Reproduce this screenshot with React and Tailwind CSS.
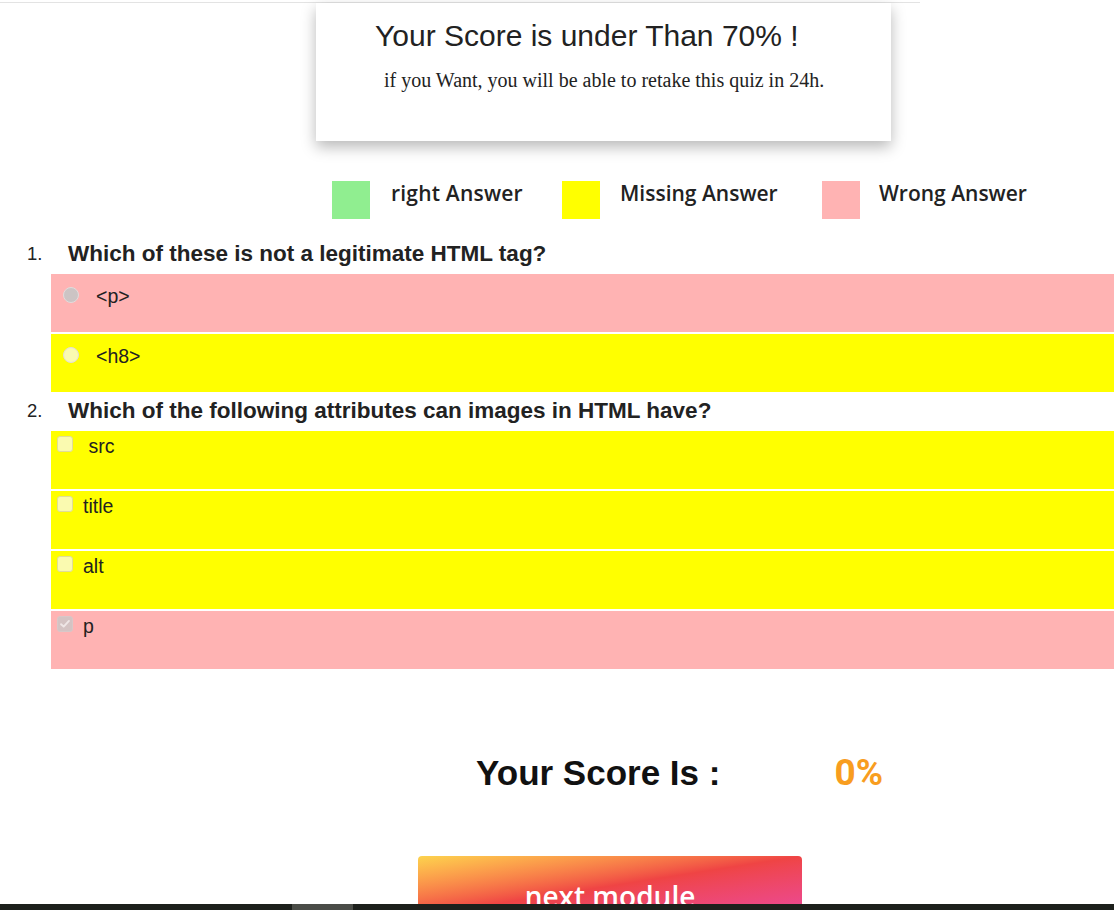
import React from 'react';

const PINK = 'bg-[#ffb3b3]';
const YELLOW = 'bg-[#ffff00]';

const questions = [
  {
    n: '1.',
    text: 'Which of these is not a legitimate HTML tag?',
    type: 'radio',
    options: [
      { label: '<p>', state: 'wrong', checked: true },
      { label: '<h8>', state: 'missing' },
    ],
  },
  {
    n: '2.',
    text: 'Which of the following attributes can images in HTML have?',
    type: 'checkbox',
    options: [
      { label: '\u00a0src', state: 'missing' },
      { label: 'title', state: 'missing' },
      { label: 'alt', state: 'missing' },
      { label: 'p', state: 'wrong', checked: true },
    ],
  },
];

function Radio({ state }) {
  const fill = state === 'wrong' ? 'bg-[#ccc4c4]' : 'bg-[#fafab0]';
  return (
    <span className={`mt-[2px] h-[16px] w-[16px] shrink-0 rounded-full border border-[#e2dcdc] ${fill}`} />
  );
}

function Checkbox({ state, checked }) {
  const fill = state === 'wrong' ? 'bg-[#d4c3c3] border-[#d8c8c8]' : 'bg-[#fafab0] border-[#e0dd9a]';
  return (
    <span className={`relative h-[16px] w-[16px] shrink-0 rounded-[3px] border ${fill}`}>
      {checked && (
        <svg viewBox="0 0 16 16" className="absolute inset-0 h-full w-full">
          <path d="M3.5 8.2 L6.5 11 L12.5 4.5" fill="none" stroke="#efe6e6" strokeWidth="2.2" strokeLinecap="round" strokeLinejoin="round" />
        </svg>
      )}
    </span>
  );
}

export default function App() {
  return (
    <div className="min-h-[910px] bg-white font-['Liberation_Sans',Arial,sans-serif] text-[#222]">
      <div className="h-[2px]" />
      <div className="h-px w-[920px] bg-[#e3e3e3]" />

      {/* result card */}
      <div className="ml-[316px] h-[138px] w-[575px] bg-white shadow-[0_6px_14px_rgba(0,0,0,0.28)]">
        <h2 className="pl-[59px] pt-[16px] text-[30px] leading-[34px] text-[#222]">
          Your Score is under Than 70% !
        </h2>
        <p className="pl-[68px] pt-[15px] font-['Liberation_Serif','Times_New_Roman',serif] text-[20px] leading-[24px] text-[#222]">
          if you Want, you will be able to retake this quiz in 24h.
        </p>
      </div>

      {/* legend */}
      <div className="ml-[332px] mt-[40px] flex items-start font-['Open_Sans',sans-serif] text-[21px] font-semibold text-[#222]">
        <div className="flex w-[230px] items-start">
          <span className="h-[38px] w-[38px] bg-[#90ee90]" />
          <span className="ml-[21px] leading-[24px] tracking-[0.2px]">right Answer</span>
        </div>
        <div className="flex w-[260px] items-start">
          <span className="h-[38px] w-[38px] bg-[#ffff00]" />
          <span className="ml-[20px] leading-[24px]">Missing Answer</span>
        </div>
        <div className="flex items-start">
          <span className="h-[38px] w-[38px] bg-[#ffb3b3]" />
          <span className="ml-[19px] leading-[24px]">Wrong Answer</span>
        </div>
      </div>

      {/* questions */}
      <div className="mt-[22px]">
        {questions.map((q, qi) => (
          <div key={qi} className={qi === 0 ? '' : 'mt-[6px]'}>
            <div className="flex items-center">
              <span className="w-[68px] pl-[27px] text-[18.5px] leading-[26px]">{q.n}</span>
              <span className="text-[22.5px] font-bold leading-[26px] text-[#222]">{q.text}</span>
            </div>
            <div className="ml-[51px] mt-[7px] flex flex-col gap-[2px]">
              {q.options.map((o, oi) => (
                <div
                  key={oi}
                  className={`flex h-[58px] items-start ${o.state === 'wrong' ? PINK : YELLOW} ${
                    q.type === 'radio' ? 'pl-[12px] pt-[11px]' : 'pl-[6px] pt-[5px]'
                  }`}
                >
                  {q.type === 'radio' ? (
                    <>
                      <Radio state={o.state} />
                      <span className="ml-[17px] text-[19.5px] leading-[22px]">{o.label}</span>
                    </>
                  ) : (
                    <>
                      <Checkbox state={o.state} checked={o.checked} />
                      <span className="ml-[10px] -mt-[1px] text-[19.5px] leading-[22px]">{o.label}</span>
                    </>
                  )}
                </div>
              ))}
            </div>
          </div>
        ))}
      </div>

      {/* score */}
      <div className="mt-[84px] flex items-center">
        <span className="ml-[476px] text-[35px] font-bold leading-[40px] text-[#111]">Your Score Is :</span>
        <span className="ml-[114px] font-['Roboto',sans-serif] text-[37px] font-bold leading-[40px] text-[#f89d1f]">0%</span>
      </div>

      {/* next module */}
      <div className="ml-[418px] mt-[63px]">
        <button className="h-[60px] w-[384px] rounded-[4px] bg-gradient-to-br from-[#fcd34d] via-[#ef4444] to-[#ec4899] pt-[20px] font-['Open_Sans',sans-serif] text-[28px] font-semibold leading-[36px] text-white">
          next module
        </button>
      </div>

      {/* bottom scrollbar strip */}
      <div className="fixed bottom-0 left-0 h-[6px] w-full bg-[#1d201c]">
        <div className="ml-[292px] h-full w-[61px] bg-[#4a4c47]" />
      </div>
    </div>
  );
}
